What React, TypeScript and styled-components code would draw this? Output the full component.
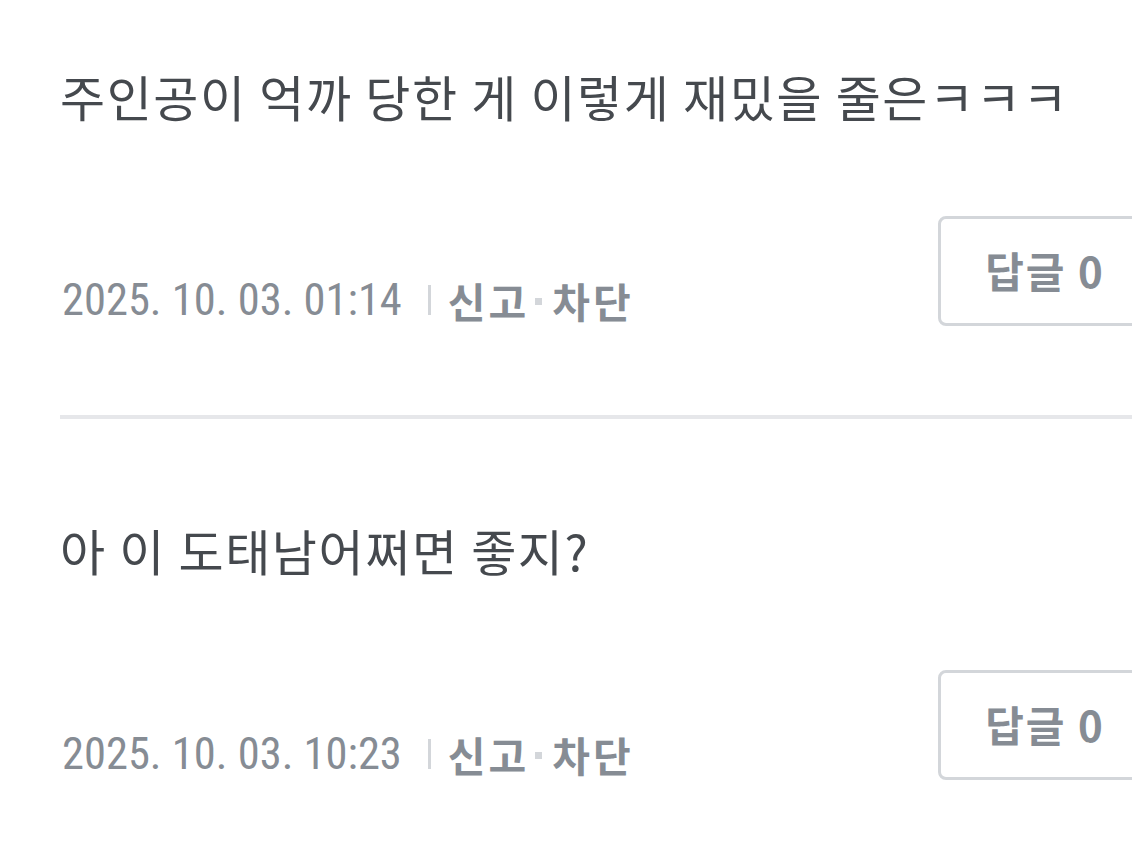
import React from "react";
import styled, { createGlobalStyle } from "styled-components";

const GlobalStyle = createGlobalStyle`
  html, body {
    margin: 0;
    padding: 0;
    background: #ffffff;
    overflow: hidden;
  }
  body {
    font-family: "Noto Sans CJK KR", "Noto Sans", sans-serif;
  }
`;

const List = styled.ul`
  list-style: none;
  margin: 0;
  padding: 0 0 0 60px;
  width: 1092px;
`;

const Item = styled.li`
  display: flex;
  flex-direction: column;
  padding: 96px 0 89px;
  border-bottom: 4px solid #e6e7ea;
  &:first-child {
    padding-top: 61px;
  }
`;

const Body = styled.p`
  margin: 0;
  font-family: "Noto Sans CJK KR", sans-serif;
  font-size: 49px;
  line-height: 69px;
  color: #45494e;
  letter-spacing: 1.6px;
`;

const Footer = styled.div`
  display: flex;
  align-items: flex-end;
  justify-content: space-between;
  margin-top: 86px;
`;

const Meta = styled.div`
  display: flex;
  align-items: center;
  height: 52px;
  color: #868c94;
`;

const DateText = styled.span`
  font-family: "Liberation Sans Narrow", "Roboto Condensed", "DejaVu Sans Condensed", sans-serif;
  font-size: 44.5px;
  padding-left: 2px;
`;

const Bar = styled.span`
  display: block;
  width: 3px;
  height: 30px;
  background: #d3d6da;
  margin: 0 17px 0 26px;
`;

const Action = styled.button`
  border: 0;
  background: none;
  padding: 0;
  font-family: "Noto Sans CJK KR", sans-serif;
  font-weight: 700;
  font-size: 41px;
  letter-spacing: 3px;
  color: #868c94;
  cursor: pointer;
`;

const Dot = styled.span`
  display: block;
  width: 7px;
  height: 7px;
  background: #d3d6da;
  margin: 2px 10px 0 6px;
`;

const ReplyButton = styled.button`
  box-sizing: border-box;
  height: 110px;
  width: 214px;
  border: 3px solid #d3d6da;
  border-radius: 8px;
  background: #ffffff;
  font-family: "Noto Sans CJK KR", sans-serif;
  font-weight: 700;
  font-size: 42px;
  letter-spacing: 2px;
  color: #868c94;
  padding: 0 0 4px;
  cursor: pointer;
`;

type Comment = { text: string; date: string; replies: number };

const comments: Comment[] = [
  { text: "주인공이 억까 당한 게 이렇게 재밌을 줄은ㅋㅋㅋ", date: "2025. 10. 03. 01:14", replies: 0 },
  { text: "아 이 도태남어쩌면 좋지?", date: "2025. 10. 03. 10:23", replies: 0 },
];

export default function App() {
  return (
    <>
      <GlobalStyle />
      <List>
        {comments.map((c, i) => (
          <Item key={i}>
            <Body>{c.text}</Body>
            <Footer>
              <Meta>
                <DateText>{c.date}</DateText>
                <Bar />
                <Action>신고</Action>
                <Dot />
                <Action>차단</Action>
              </Meta>
              <ReplyButton>답글 {c.replies}</ReplyButton>
            </Footer>
          </Item>
        ))}
      </List>
    </>
  );
}
